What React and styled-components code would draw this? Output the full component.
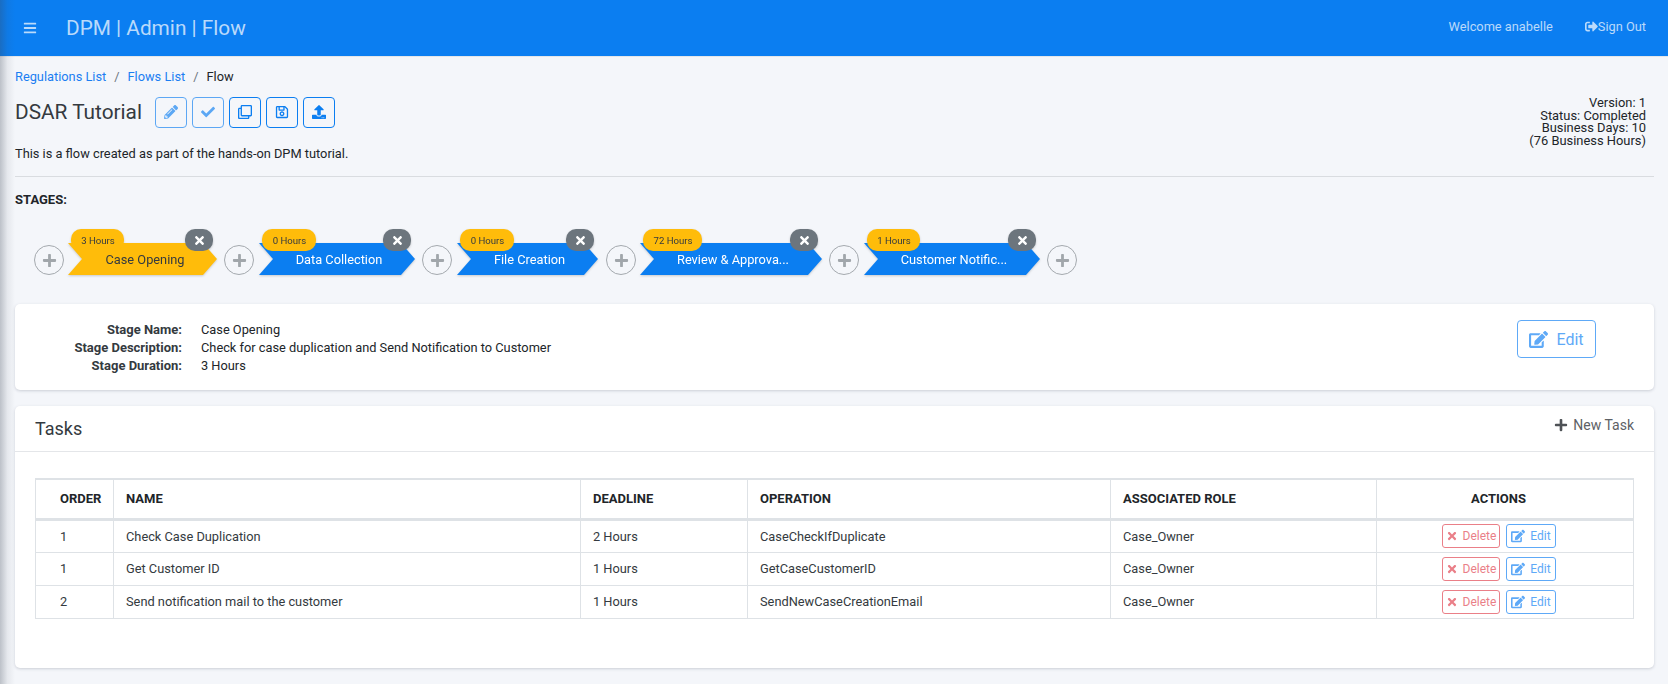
import React from 'react';
import styled, { createGlobalStyle } from 'styled-components';
import { FaBars, FaPencilAlt, FaCheck, FaRegClone, FaRegSave, FaUpload, FaSignOutAlt, FaTimes, FaPlus, FaEdit } from 'react-icons/fa';

const Global = createGlobalStyle`
  html, body { margin: 0; padding: 0; height: 684px; overflow: hidden; background: #f4f6fa; }
  body { font-family: Roboto, "Liberation Sans", sans-serif; font-size: 12.8px; color: #212529; }
  * { box-sizing: border-box; }
`;

const Page = styled.div`position: relative; width: 1668px; height: 684px; overflow: hidden;`;
const SideShadow = styled.div`
  position: absolute; left: 0; top: 0; bottom: 0; width: 15px; pointer-events: none;
  background: linear-gradient(to right, rgba(60,70,85,.3), rgba(60,70,85,.08) 50%, rgba(60,70,85,0));
`;
const Navbar = styled.header`
  height: 57px; background: #0b7ef1; display: flex; align-items: center; padding: 0 22px 0 23px;
  color: rgba(255,255,255,.72); border-bottom: 1px solid #e3e6ea;
`;
const Burger = styled.span`display: flex; font-size: 14px; width: 43px;`;
const Brand = styled.div`font-size: 20.8px; flex: 1; line-height: 1;`;
const NavText = styled.span`font-size: 12.8px; margin: 0 32px 4px 0;`;
const NavLink = styled.span`font-size: 12.8px; display: flex; align-items: center; margin-bottom: 4px; svg { font-size: 13px; }`;

const Content = styled.main`padding: 0 14px 0 15px;`;
const Crumbs = styled.nav`display: flex; height: 16px; margin-top: 12px; align-items: center; font-size: 12.8px; line-height: 16px;`;
const Crumb = styled.a`color: #1b7ef2;`;
const Sep = styled.span`color: #6c757d; margin: 0 8px;`;
const Head = styled.div`display: flex; justify-content: space-between; align-items: flex-start; margin-top: 11px;`;
const HeadLeft = styled.div`display: flex; flex-direction: column;`;
const TitleRow = styled.div`display: flex; align-items: center; height: 32px;`;
const Title = styled.h1`margin: 0 13px 0 0; font-size: 20.8px; font-weight: 400; color: #343a40;`;
const IconBtn = styled.button`
  width: 32px; height: 31px; margin-right: 5px; padding: 0; display: flex; align-items: center; justify-content: center;
  background: transparent; border: 1px solid #0b7ef1; border-radius: 4px; color: #0b7ef1; font-size: 14px;
  opacity: ${p => (p.$off ? 0.65 : 1)};
`;
const Desc = styled.p`margin: 18px 0 0; font-size: 12.8px; line-height: 16px;`;
const Meta = styled.div`text-align: right; font-size: 12.9px; line-height: 12.6px; margin-right: 8px; margin-top: 1px;`;
const Rule = styled.hr`margin: 14px 0 0; border: 0; border-top: 1px solid #d9dce0;`;
const StagesLabel = styled.div`font-weight: 700; font-size: 13px; line-height: 16px; margin-top: 15px;`;

const Track = styled.div`display: flex; align-items: flex-end; margin: 21px 0 0 19px; height: 46px;`;
const AddBtn = styled.span`
  width: 30px; height: 30px; border-radius: 50%; border: 1px solid #a4a9ae; color: #a1a6ab;
  display: flex; align-items: center; justify-content: center; font-size: 15px; flex: none;
  margin-left: ${p => p.$ml || 0}px; margin-right: ${p => p.$mr || 0}px;
`;
const Stage = styled.div`position: relative; width: ${p => p.$w}px; height: 46px; flex: none; filter: drop-shadow(0 1px 1px rgba(0,0,0,.18));`;
const Arrow = styled.div`
  position: absolute; left: 0; right: 0; bottom: 0; height: 32px;
  background: ${p => (p.$active ? '#ffbc0a' : '#0b7ef1')};
  color: ${p => (p.$active ? '#343a40' : '#fff')};
  clip-path: polygon(0 0, calc(100% - 14px) 0, 100% 50%, calc(100% - 14px) 100%, 0 100%, 14px 50%);
  display: flex; align-items: center; justify-content: center; font-size: 12.8px; padding-left: ${p => (p.$active ? 5 : 4)}px;
`;
const Pill = styled.span`
  position: absolute; top: 0; left: 3px; width: ${p => p.$w}px; height: 22px; border-radius: 10px; background: #ffbc0a;
  color: #343a40; font-size: 9.6px; display: flex; align-items: center; justify-content: center; padding-left: 1px;
`;
const Close = styled.span`
  position: absolute; top: 0; right: 4px; width: 28px; height: 22px; border-radius: 10px; background: #6c757d; color: #fff;
  display: flex; align-items: center; justify-content: center; font-size: 13px;
`;

const Card = styled.section`
  background: #fff; border-radius: 5px; box-shadow: 0 1px 3px rgba(60,70,90,.22);
  margin-top: ${p => p.$mt}px; height: ${p => p.$h}px;
`;
const InfoCard = styled(Card)`display: flex; justify-content: space-between; align-items: center; padding: 2px 58px 0 0;`;
const InfoGrid = styled.dl`display: grid; grid-template-columns: 167px 1fr; column-gap: 19px; margin: 0; line-height: 18px; font-size: 12.8px;`;
const Label = styled.dt`font-weight: 700; font-size: 13px; text-align: right; color: #343a40;`;
const Value = styled.dd`margin: 0;`;
const BigEdit = styled.button`
  width: 79px; height: 38px; margin-bottom: 18px; background: transparent; border: 1px solid #5ea9f7; border-radius: 4px; color: #5ea9f7;
  font: 16px Roboto, sans-serif; display: flex; align-items: center; justify-content: center; gap: 8px;
  svg { font-size: 19px; }
`;
const CardHead = styled.div`
  height: 46px; display: flex; justify-content: space-between; align-items: center; padding: 0 20px; border-bottom: 1px solid #e4e6e9;
`;
const CardTitle = styled.h2`margin: 0; font-size: 18px; font-weight: 400; color: #343a40;`;
const NewTask = styled.span`display: flex; align-items: center; gap: 5px; color: #5d6165; font-size: 14px; margin-bottom: 7px; svg { font-size: 14px; color: #4e5256; }`;
const TableWrap = styled.div`padding: 26px 20px 0;`;
const Table = styled.table`width: 100%; border-collapse: collapse; table-layout: fixed; font-size: 12.8px; border: 1px solid #dee2e6;`;
const Th = styled.th`
  height: 40px; text-align: ${p => p.$center ? 'center' : 'left'}; padding: 0 ${p => p.$center ? 13 : 0}px 0 ${p => p.$center ? 0 : p.$pl || 12}px;
  font-size: 13px; font-weight: 700; border: 1px solid #dee2e6; border-top-width: 2px; border-bottom-width: 3px; color: #212529;
`;
const Td = styled.td`
  height: 33px; padding: 0 0 0 ${p => p.$pl || 12}px; border: 1px solid #dee2e6; color: #343a40;
`;
const Actions = styled.div`display: flex; justify-content: center; gap: 6px; padding-right: 13px;`;
const SmallBtn = styled.button`
  height: 24px; width: ${p => p.$w}px; padding: 0; background: transparent; border-radius: 3px; font: 12px Roboto, sans-serif;
  border: 1px solid ${p => p.$c}; color: ${p => p.$c}; display: flex; align-items: center; justify-content: center; gap: 5px;
  svg { font-size: ${p => p.$is}px; }
`;

const stages = [
  { name: 'Case Opening', hours: '3 Hours', w: 149, pw: 53, active: true, after: 7 },
  { name: 'Data Collection', hours: '0 Hours', w: 156, pw: 54, after: 7 },
  { name: 'File Creation', hours: '0 Hours', w: 141, pw: 54, after: 8 },
  { name: 'Review & Approva...', hours: '72 Hours', w: 182, pw: 59, after: 7 },
  { name: 'Customer Notific...', hours: '1 Hours', w: 176, pw: 53, after: 7 },
];
const tasks = [
  ['1', 'Check Case Duplication', '2 Hours', 'CaseCheckIfDuplicate', 'Case_Owner'],
  ['1', 'Get Customer ID', '1 Hours', 'GetCaseCustomerID', 'Case_Owner'],
  ['2', 'Send notification mail to the customer', '1 Hours', 'SendNewCaseCreationEmail', 'Case_Owner'],
];

export default function App() {
  return (
    <Page>
      <Global />
      <Navbar>
        <Burger><FaBars /></Burger>
        <Brand>DPM | Admin | Flow</Brand>
        <NavText>Welcome anabelle</NavText>
        <NavLink><FaSignOutAlt />Sign Out</NavLink>
      </Navbar>
      <Content>
        <Crumbs>
          <Crumb>Regulations List</Crumb><Sep>/</Sep><Crumb>Flows List</Crumb><Sep>/</Sep><span>Flow</span>
        </Crumbs>
        <Head>
          <HeadLeft>
            <TitleRow>
              <Title>DSAR Tutorial</Title>
              <IconBtn $off><FaPencilAlt /></IconBtn>
              <IconBtn $off><FaCheck /></IconBtn>
              <IconBtn><FaRegClone /></IconBtn>
              <IconBtn><FaRegSave /></IconBtn>
              <IconBtn><FaUpload /></IconBtn>
            </TitleRow>
            <Desc>This is a flow created as part of the hands-on DPM tutorial.</Desc>
          </HeadLeft>
          <Meta>Version: 1<br />Status: Completed<br />Business Days: 10<br />(76 Business Hours)</Meta>
        </Head>
        <Rule />
        <StagesLabel>STAGES:</StagesLabel>
        <Track>
          <AddBtn $mr={4}><FaPlus /></AddBtn>
          {stages.map(s => (
            <React.Fragment key={s.name}>
              <Stage $w={s.w}>
                <Arrow $active={s.active}>{s.name}</Arrow>
                <Pill $w={s.pw}>{s.hours}</Pill>
                <Close><FaTimes /></Close>
              </Stage>
              <AddBtn $ml={s.after} $mr={s.after === 8 ? 4 : 5}><FaPlus /></AddBtn>
            </React.Fragment>
          ))}
        </Track>
        <InfoCard $mt={29} $h={86}>
          <InfoGrid>
            <Label>Stage Name:</Label><Value>Case Opening</Value>
            <Label>Stage Description:</Label><Value>Check for case duplication and Send Notification to Customer</Value>
            <Label>Stage Duration:</Label><Value>3 Hours</Value>
          </InfoGrid>
          <BigEdit><FaEdit />Edit</BigEdit>
        </InfoCard>
        <Card $mt={16} $h={262}>
          <CardHead>
            <CardTitle>Tasks</CardTitle>
            <NewTask><FaPlus />New Task</NewTask>
          </CardHead>
          <TableWrap>
            <Table>
              <colgroup>
                <col style={{ width: 78 }} /><col style={{ width: 467 }} /><col style={{ width: 167 }} />
                <col style={{ width: 363 }} /><col style={{ width: 266 }} /><col />
              </colgroup>
              <thead>
                <tr>
                  <Th $pl={24}>ORDER</Th><Th>NAME</Th><Th>DEADLINE</Th><Th>OPERATION</Th><Th>ASSOCIATED ROLE</Th><Th $center>ACTIONS</Th>
                </tr>
              </thead>
              <tbody>
                {tasks.map(t => (
                  <tr key={t[1]}>
                    <Td $pl={24}>{t[0]}</Td><Td>{t[1]}</Td><Td>{t[2]}</Td><Td>{t[3]}</Td><Td>{t[4]}</Td>
                    <Td $pl={1}>
                      <Actions>
                        <SmallBtn $w={58} $c="#ea7f88" $is={12}><FaTimes />Delete</SmallBtn>
                        <SmallBtn $w={50} $c="#5ea9f7" $is={14}><FaEdit />Edit</SmallBtn>
                      </Actions>
                    </Td>
                  </tr>
                ))}
              </tbody>
            </Table>
          </TableWrap>
        </Card>
      </Content>
      <SideShadow />
    </Page>
  );
}
